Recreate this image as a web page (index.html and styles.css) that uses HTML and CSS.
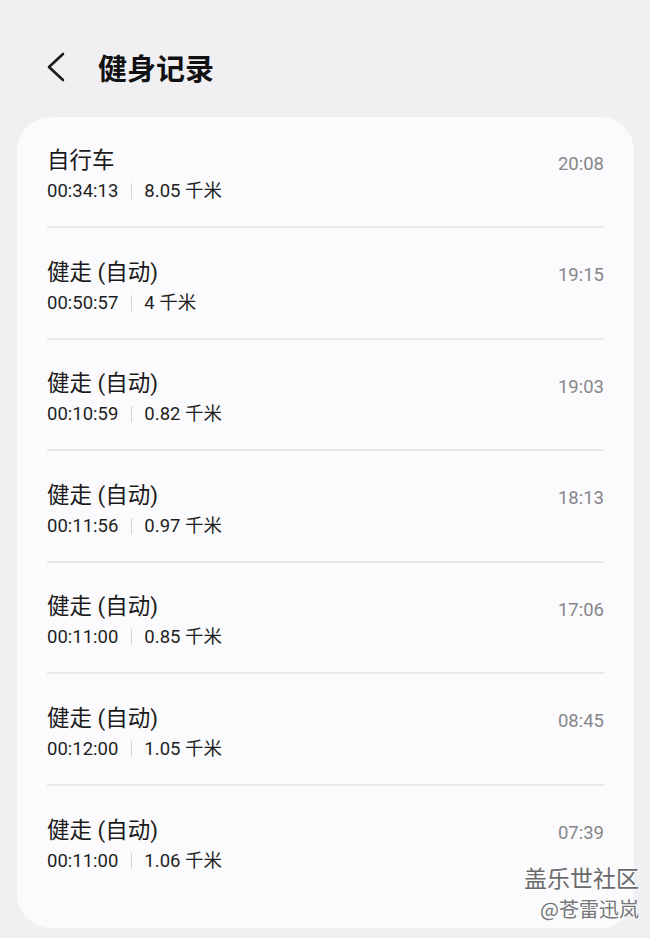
FILE: index.html
```html
<!DOCTYPE html>
<html lang="zh-CN">

<head>
    <meta charset="UTF-8">
    <meta name="viewport" content="width=device-width, initial-scale=1.0">
    <title>健身记录</title>
    <link rel="stylesheet" href="styles.css">
</head>

<body>
    <div class="screen">
        <header class="top-bar">
            <svg class="back-icon" width="20" height="30" viewBox="0 0 20 30">
                <polyline points="17,2 3,15 17,28" fill="none" stroke="#1a1a1a" stroke-width="2.6"
                    stroke-linecap="round" stroke-linejoin="round" />
            </svg>
            <h1>健身记录</h1>
        </header>

        <div class="card">
            <div class="record">
                <div class="info">
                    <div class="name">自行车</div>
                    <div class="meta"><span>00:34:13</span><i class="divider"></i><span>8.05 千米</span></div>
                </div>
                <div class="time">20:08</div>
            </div>
            <div class="record">
                <div class="info">
                    <div class="name">健走 (自动)</div>
                    <div class="meta"><span>00:50:57</span><i class="divider"></i><span>4 千米</span></div>
                </div>
                <div class="time">19:15</div>
            </div>
            <div class="record">
                <div class="info">
                    <div class="name">健走 (自动)</div>
                    <div class="meta"><span>00:10:59</span><i class="divider"></i><span>0.82 千米</span></div>
                </div>
                <div class="time">19:03</div>
            </div>
            <div class="record">
                <div class="info">
                    <div class="name">健走 (自动)</div>
                    <div class="meta"><span>00:11:56</span><i class="divider"></i><span>0.97 千米</span></div>
                </div>
                <div class="time">18:13</div>
            </div>
            <div class="record">
                <div class="info">
                    <div class="name">健走 (自动)</div>
                    <div class="meta"><span>00:11:00</span><i class="divider"></i><span>0.85 千米</span></div>
                </div>
                <div class="time">17:06</div>
            </div>
            <div class="record">
                <div class="info">
                    <div class="name">健走 (自动)</div>
                    <div class="meta"><span>00:12:00</span><i class="divider"></i><span>1.05 千米</span></div>
                </div>
                <div class="time">08:45</div>
            </div>
            <div class="record">
                <div class="info">
                    <div class="name">健走 (自动)</div>
                    <div class="meta"><span>00:11:00</span><i class="divider"></i><span>1.06 千米</span></div>
                </div>
                <div class="time">07:39</div>
            </div>
        </div>

        <!-- 水印 -->
        <div class="watermark">
            <div class="wm-main">盖乐世社区</div>
            <div class="wm-sub">@苍雷迅岚</div>
        </div>
    </div>
</body>

</html>
```

FILE: styles.css
```css
body {
    margin: 0;
    background: #f0f0f3;
    font-family: Roboto, "Noto Sans CJK SC", sans-serif;
    color: #1c1c1c;
}

.screen {
    position: relative;
    width: 650px;
    height: 938px;
    overflow: hidden;
}

.top-bar {
    display: flex;
    align-items: center;
    height: 70px;
    padding: 32px 0 0 46px;
}

.back-icon {
    margin-right: 32px;
}

.top-bar h1 {
    margin: 0;
    font-family: "Noto Sans CJK SC", sans-serif;
    font-size: 29px;
    font-weight: 700;
    line-height: 34px;
    color: #111;
}

.card {
    margin: 15px 16px 0 17px;
    padding: 0 30px 32px 30px;
    background: #fbfbfd;
    border-radius: 34px;
}

.record {
    display: flex;
    justify-content: space-between;
    align-items: flex-start;
    padding: 28.5px 0 22.1px 0;
    border-bottom: 2px solid #e8e8eb;
}

.record:first-child {
    padding-top: 28px;
}

.record:last-child {
    border-bottom: none;
}

.name {
    font-size: 22.5px;
    line-height: 30px;
    color: #1a1a1a;
}

.meta {
    display: flex;
    align-items: center;
    margin-top: 3px;
    font-size: 18.5px;
    line-height: 26px;
    color: #1f1f1f;
}

.divider {
    display: inline-block;
    width: 1px;
    height: 16px;
    margin: 0 12px 0 13px;
    background: #d6d6d9;
}

.time {
    margin-top: 5.5px;
    font-size: 18.5px;
    line-height: 26px;
    color: #86868a;
}

.watermark {
    position: absolute;
    right: 11px;
    top: 862px;
    text-align: right;
    font-family: "Noto Sans CJK SC", sans-serif;
    color: #6a6a6c;
    text-shadow: 1px 1px 0 rgba(255, 255, 255, 0.8);
}

.wm-main {
    font-size: 23px;
    line-height: 30px;
}

.wm-sub {
    margin-top: 5px;
    font-size: 20px;
    line-height: 24px;
    color: #767678;
}
```
